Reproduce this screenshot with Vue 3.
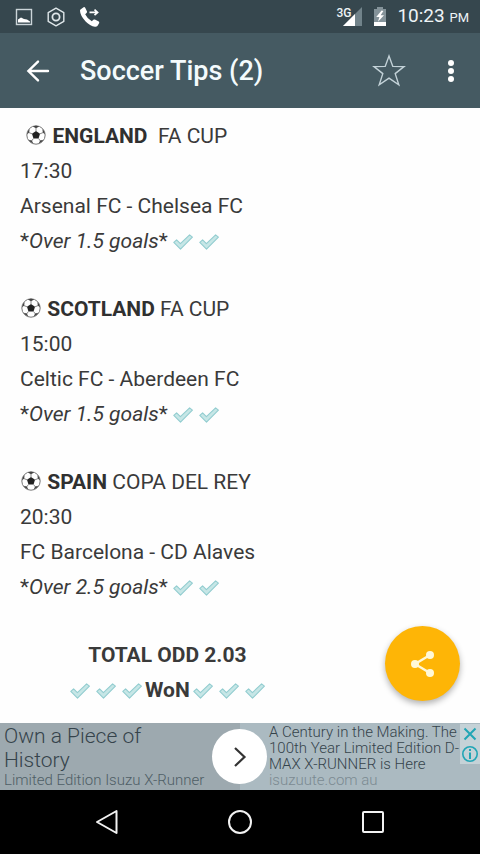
<script setup>
const matches = [
  { lead: ' ', country: 'ENGLAND', gap: '  ', cup: 'FA CUP', time: '17:30', teams: 'Arsenal FC - Chelsea FC', tip: 'Over 1.5 goals' },
  { lead: '', country: 'SCOTLAND', gap: ' ', cup: 'FA CUP', time: '15:00', teams: 'Celtic FC - Aberdeen FC', tip: 'Over 1.5 goals' },
  { lead: '', country: 'SPAIN', gap: ' ', cup: 'COPA DEL REY', time: '20:30', teams: 'FC Barcelona - CD Alaves', tip: 'Over 2.5 goals' },
]
</script>

<template>
  <div class="screen">
    <svg class="defs" aria-hidden="true">
      <symbol id="check" viewBox="0 0 20 16">
        <path d="M.8 8.4 3.6 5.8 7.4 9.6 16.6 .8 19.4 3.2 7.5 15.2Z" fill="#c6e6e6" stroke="#93cdd0" stroke-width="1.1" stroke-linejoin="round" />
      </symbol>
      <symbol id="ball" viewBox="0 0 20 20">
        <circle cx="10" cy="10" r="9.2" fill="#fff" stroke="#777" stroke-width="1" />
        <path d="M10 5.9 14 8.8 12.5 13.4H7.5L6 8.8Z" fill="#222" />
        <path d="M10 6V3M14 8.8 17 7.6M12.5 13.4 14.4 16M7.5 13.4 5.6 16M6 8.8 3 7.6" stroke="#888" stroke-width="1" />
        <path d="M6.8 1.5 10 3.3 13.2 1.5Q10 .2 6.8 1.5ZM16.4 4 16.8 7.6 19 9.6Q19 6 16.4 4ZM3.6 4 3.2 7.6 1 9.6Q1 6 3.6 4ZM17.4 14.8 14.2 15.6 12.6 18.6Q15.8 17.8 17.4 14.8ZM2.6 14.8 5.8 15.6 7.4 18.6Q4.2 17.8 2.6 14.8Z" fill="#444" />
      </symbol>
    </svg>

    <div class="status">
      <div class="status-group notices">
        <svg width="18" height="18" viewBox="0 0 18 18"><rect x="1.5" y="1.5" width="15" height="15" fill="none" stroke="#cbd5d9" stroke-width="1.4" /><path d="M3 14.5V11.4L6 9.5 9 11 12 11.6 15 13.6V14.5Z" fill="#fff" /></svg>
        <svg width="20" height="20" viewBox="0 0 20 20" fill="none" stroke="#dfe7ea"><path d="M10 1.2 17.8 5.6V14.4L10 18.8 2.2 14.4V5.6Z" stroke-width="1.4" stroke-linejoin="round" /><circle cx="10" cy="10" r="3.6" stroke-width="1.8" /></svg>
        <svg width="22" height="22" viewBox="0 0 22 22"><path d="M1.5 3.4 4.6 1.2Q5.6.8 6.2 1.8L8 5.4Q8.3 6.3 7.5 6.9L6.2 8.2Q8.2 12.6 12.8 15.2L14.3 13.8Q15 13.2 15.9 13.6L19.8 15.6Q20.6 16.2 20.1 17.2L18.4 20Q17.6 21 16 20.8 11 20 6.4 15.2 1.2 9.6 1 4.8 1 3.9 1.5 3.4Z" fill="#fff" /><path d="M10.5 6.4H18M15.5 3.6 18.6 6.4 15.5 9.2" fill="none" stroke="#fff" stroke-width="1.7" /></svg>
      </div>
      <div class="status-group">
        <div class="signal">
          <span class="network">3G</span>
          <svg width="20" height="20" viewBox="0 0 20 20"><path d="M19 0V19H0Z" fill="#71838a" /><path d="M12 7V19H0Z" fill="#fff" /></svg>
        </div>
        <svg width="14" height="20" viewBox="0 0 14 20"><path d="M4 0H10V2H13V19H1V2H4Z" fill="#84939a" /><path d="M1 15H13V19H1Z" fill="#fff" /><path d="M8.6 3.6 3.2 10H6.4L5 14.8 11 8.2H7.6L10.4 4Z" fill="#fff" /></svg>
        <time class="clock">10:23 <small>PM</small></time>
      </div>
    </div>

    <header class="bar">
      <button class="icon-button" aria-label="Back"><svg width="24" height="24" viewBox="0 0 24 24" fill="none" stroke="#fff" stroke-width="2.4" stroke-linecap="round"><path d="M22 12H3M12 2.6 2.4 12 12 21.4" /></svg></button>
      <h1>Soccer Tips (2)</h1>
      <button class="icon-button" aria-label="Favourite"><svg width="34" height="34" viewBox="0 0 34 34" fill="none" stroke="#c3d2d8" stroke-width="1.4"><path d="M17 2 20.8 12.4 32 12.6 23.2 19.6 26.8 30.8 17 24.2 7.2 30.8 10.8 19.6 2 12.6 13.2 12.4Z" /></svg></button>
      <button class="icon-button more" aria-label="More options"><svg width="8" height="24" viewBox="0 0 8 24" fill="#fff"><circle cx="4" cy="4" r="3" /><circle cx="4" cy="12" r="3" /><circle cx="4" cy="20" r="3" /></svg></button>
    </header>

    <main class="content">
      <section v-for="m in matches" :key="m.country" class="match">
        <p>{{ m.lead }}<svg class="ball" width="20" height="20"><use href="#ball" /></svg> <b>{{ m.country }}</b>{{ m.gap }}{{ m.cup }}</p>
        <p>{{ m.time }}</p>
        <p>{{ m.teams }}</p>
        <p class="tip"><span>*<i>{{ m.tip }}</i>*</span><span class="checks"><svg v-for="n in 2" :key="n" width="20" height="16"><use href="#check" /></svg></span></p>
      </section>
      <section class="total">
        <p>TOTAL ODD 2.03</p>
        <p class="won">
          <span class="checks"><svg v-for="n in 3" :key="n" width="20" height="16"><use href="#check" /></svg></span>
          <span>WoN</span>
          <span class="checks"><svg v-for="n in 3" :key="n" width="20" height="16"><use href="#check" /></svg></span>
        </p>
      </section>
      <button class="share" aria-label="Share"><svg width="28" height="28" viewBox="0 0 28 28" fill="#fff8d8"><path d="M21 5 6 14 21 23" fill="none" stroke="#fff8d8" stroke-width="2.4" /><circle cx="21" cy="5" r="4" /><circle cx="6" cy="14" r="4" /><circle cx="21" cy="23" r="4" /></svg></button>
    </main>

    <aside class="ad">
      <a href="#" class="ad-left"><span class="ad-title">Own a Piece of<br>History</span><span class="ad-sub">Limited Edition Isuzu X-Runner</span></a>
      <a href="#" class="ad-right"><span>A Century in the Making. The</span><span>100th Year Limited Edition D-</span><span>MAX X-RUNNER is Here</span><span class="ad-site">isuzuute.com au</span></a>
      <button class="ad-go" aria-label="Open"><svg width="14" height="20" viewBox="0 0 14 20" fill="none" stroke="#333" stroke-width="2.2"><path d="M2 1 11.5 10 2 19" /></svg></button>
      <div class="ad-tools">
        <button aria-label="Close ad"><svg width="14" height="14" viewBox="0 0 14 14" stroke="#22a5b5" stroke-width="2"><path d="M1.5 1.5 12.5 12.5M12.5 1.5 1.5 12.5" /></svg></button>
        <button aria-label="About this ad"><svg width="18" height="18" viewBox="0 0 18 18" fill="none" stroke="#22a5b5"><circle cx="9" cy="9" r="7.2" stroke-width="1.6" /><path d="M9 4V6M9 7.4V14" stroke-width="2" /></svg></button>
      </div>
    </aside>

    <nav class="nav">
      <button aria-label="Back"><svg width="26" height="26" viewBox="0 0 26 26"><path d="M22.5 2V24L3 13Z" /></svg></button>
      <button aria-label="Home"><svg width="26" height="26" viewBox="0 0 26 26"><circle cx="13" cy="13" r="11" /></svg></button>
      <button aria-label="Recent apps"><svg width="26" height="26" viewBox="0 0 26 26"><rect x="3" y="3" width="20" height="20" rx="1" /></svg></button>
    </nav>
  </div>
</template>

<style>
body { margin: 0; }
</style>

<style scoped>
.screen { position: relative; display: flex; flex-direction: column; min-height: 100vh; background: #fefefe; font-family: Roboto, "Liberation Sans", sans-serif; }
.defs { position: absolute; width: 0; height: 0; }
svg { flex: none; display: block; }
button { padding: 0; border: 0; background: none; display: flex; align-items: center; justify-content: center; }
a { color: inherit; text-decoration: none; }
.status { display: flex; justify-content: space-between; align-items: center; height: 33px; padding: 0 11px 0 15px; background: #36474e; color: #eef4f6; }
.status-group { display: flex; align-items: center; gap: 10px; }
.notices { gap: 13px; }
.signal { display: flex; align-items: center; }
.network { align-self: flex-start; margin-right: -8px; font-size: 12px; line-height: 12px; font-weight: 500; }
.clock { font-size: 19px; line-height: 24px; }
.clock small { font-size: 13px; }
.bar { display: flex; align-items: center; height: 75px; padding: 0 7px 0 16px; background: #455a62; color: #f4fbfd; }
.icon-button { width: 44px; height: 44px; }
.more { margin-left: 18px; }
h1 { flex: 1; margin: 0 0 0 20px; font-size: 27px; line-height: 32px; font-weight: 500; }
.content { position: relative; flex: 1; display: flex; flex-direction: column; gap: 33px; padding: 11px 20px 15px; color: #3a3a3a; font-size: 21px; line-height: 35px; }
p { margin: 0; white-space: pre; }
b { font-weight: 700; color: #303030; }
.ball { display: inline-block; margin: 0 1px; vertical-align: -2px; }
.tip, .won { display: flex; align-items: center; }
.won { gap: 3px; }
.checks { display: flex; gap: 6px; margin-left: 5px; }
.won .checks { margin-left: 0; }
.total { align-self: flex-start; display: flex; flex-direction: column; align-items: center; margin-left: 50px; font-weight: 700; }
.share { position: absolute; right: 20px; bottom: 22px; width: 75px; height: 75px; border-radius: 50%; background: #feb506; box-shadow: 0 3px 6px rgba(0, 0, 0, .3); }
.ad { position: relative; display: grid; grid-template-columns: 1fr 1fr; height: 67px; background: #9da9af; font-weight: 300; color: #35434b; }
.ad-left { display: flex; flex-direction: column; padding-left: 4px; padding-top: 1px; }
.ad-title { font-size: 21px; line-height: 24px; }
.ad-sub { font-size: 15px; line-height: 16px; color: #4f5e66; }
.ad-right { padding: 1px 0 0 29px; background: #abbac1; font-size: 15px; line-height: 16px; white-space: nowrap; }
.ad-right span { display: block; }
.ad-site { color: #7b8a92; }
.ad-go { position: absolute; left: calc(50% - 28px); top: 6px; width: 55px; height: 55px; border-radius: 50%; background: #fff; }
.ad-tools { position: absolute; top: 1px; right: 0; display: flex; flex-direction: column; }
.ad-tools button { width: 20px; height: 20px; background: #c5d2d7; }
.nav { display: flex; justify-content: center; align-items: center; height: 64px; gap: 107px; background: #000; }
.nav svg { fill: none; stroke: #f2f2f2; stroke-width: 2; stroke-linejoin: round; }
</style>
